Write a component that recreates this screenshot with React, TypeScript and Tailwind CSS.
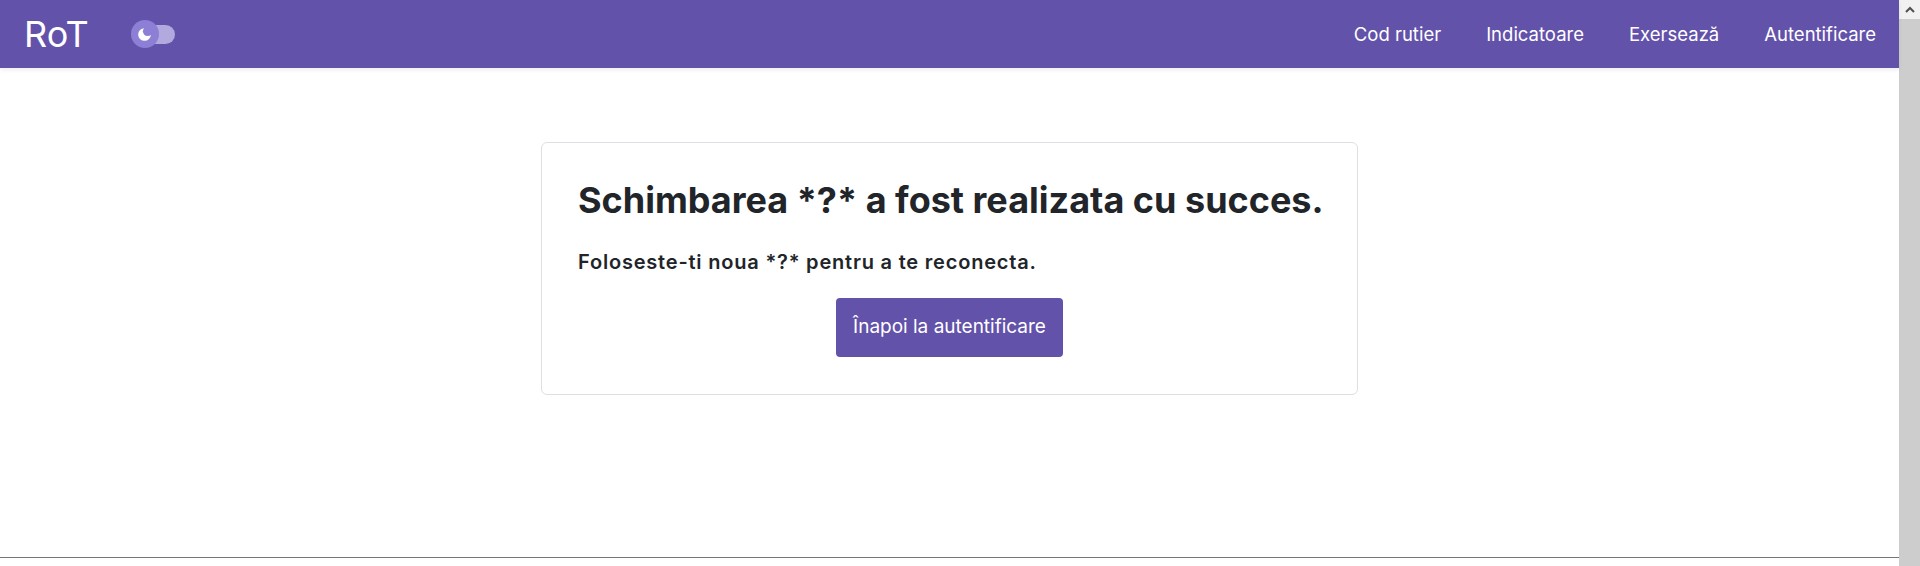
export default function App() {
  const links = ["Cod rutier", "Indicatoare", "Exersează", "Autentificare"];

  return (
    <div className="flex h-[566px] w-full overflow-hidden bg-white font-['Inter',sans-serif] text-[#212529]">
      <div className="flex flex-1 flex-col">
        <nav className="relative z-10 flex h-[68px] shrink-0 items-center bg-[#6352aa] pl-[24px] pr-[23px] shadow-[0_2px_4px_rgba(0,0,0,0.07)]">
          <span className="text-[36px] font-normal leading-none text-white">RoT</span>

          {/* theme switch */}
          <div className="relative ml-[42px] h-[28px] w-[44px]">
            <div className="absolute right-0 top-[5px] h-[19px] w-[32px] rounded-full bg-[#b2aade]" />
            <div className="absolute left-0 top-0 flex h-[28px] w-[28px] items-center justify-center rounded-full bg-[#8c7fd5]">
              <svg width="19" height="19" viewBox="0 0 24 24">
                <circle cx="12" cy="12" r="8" fill="#ffffff" />
                <circle cx="16" cy="8" r="6" fill="#8c7fd5" />
              </svg>
            </div>
          </div>

          <ul className="ml-auto flex items-center gap-[45px]">
            {links.map((l) => (
              <li key={l} className="text-[18.5px] leading-none text-white">
                {l}
              </li>
            ))}
          </ul>
        </nav>

        <main className="flex flex-1 items-start justify-center pt-[74px]">
          <div className="w-[817px] rounded-[6px] border border-[#dcdfe3] px-[36px] pb-[37px] pt-[36px]">
            <h1 className="mb-[25px] whitespace-nowrap text-[36px] font-bold leading-[1.2]">
              Schimbarea *?* a fost realizata cu succes.
            </h1>
            <h5 className="text-[20px] font-semibold leading-[1.5] tracking-[0.04em]">
              Foloseste-ti noua *?* pentru a te reconecta.
            </h5>
            <div className="mt-[21px] flex justify-center">
              <button className="h-[59px] rounded-[4px] bg-[#6352aa] px-[17px] text-[19px] text-white">
                Înapoi la autentificare
              </button>
            </div>
          </div>
        </main>

        <div className="h-[9px] shrink-0 border-t border-[#767676]" />
      </div>

      {/* scrollbar */}
      <div className="flex w-[21px] shrink-0 flex-col bg-[#cdcdcd]">
        <div className="flex h-[19px] items-center justify-center bg-[#f1f1f1]">
          <svg width="10" height="7" viewBox="0 0 10 7">
            <polyline points="1,6 5,2 9,6" fill="none" stroke="#505050" strokeWidth="2" />
          </svg>
        </div>
      </div>
    </div>
  );
}
